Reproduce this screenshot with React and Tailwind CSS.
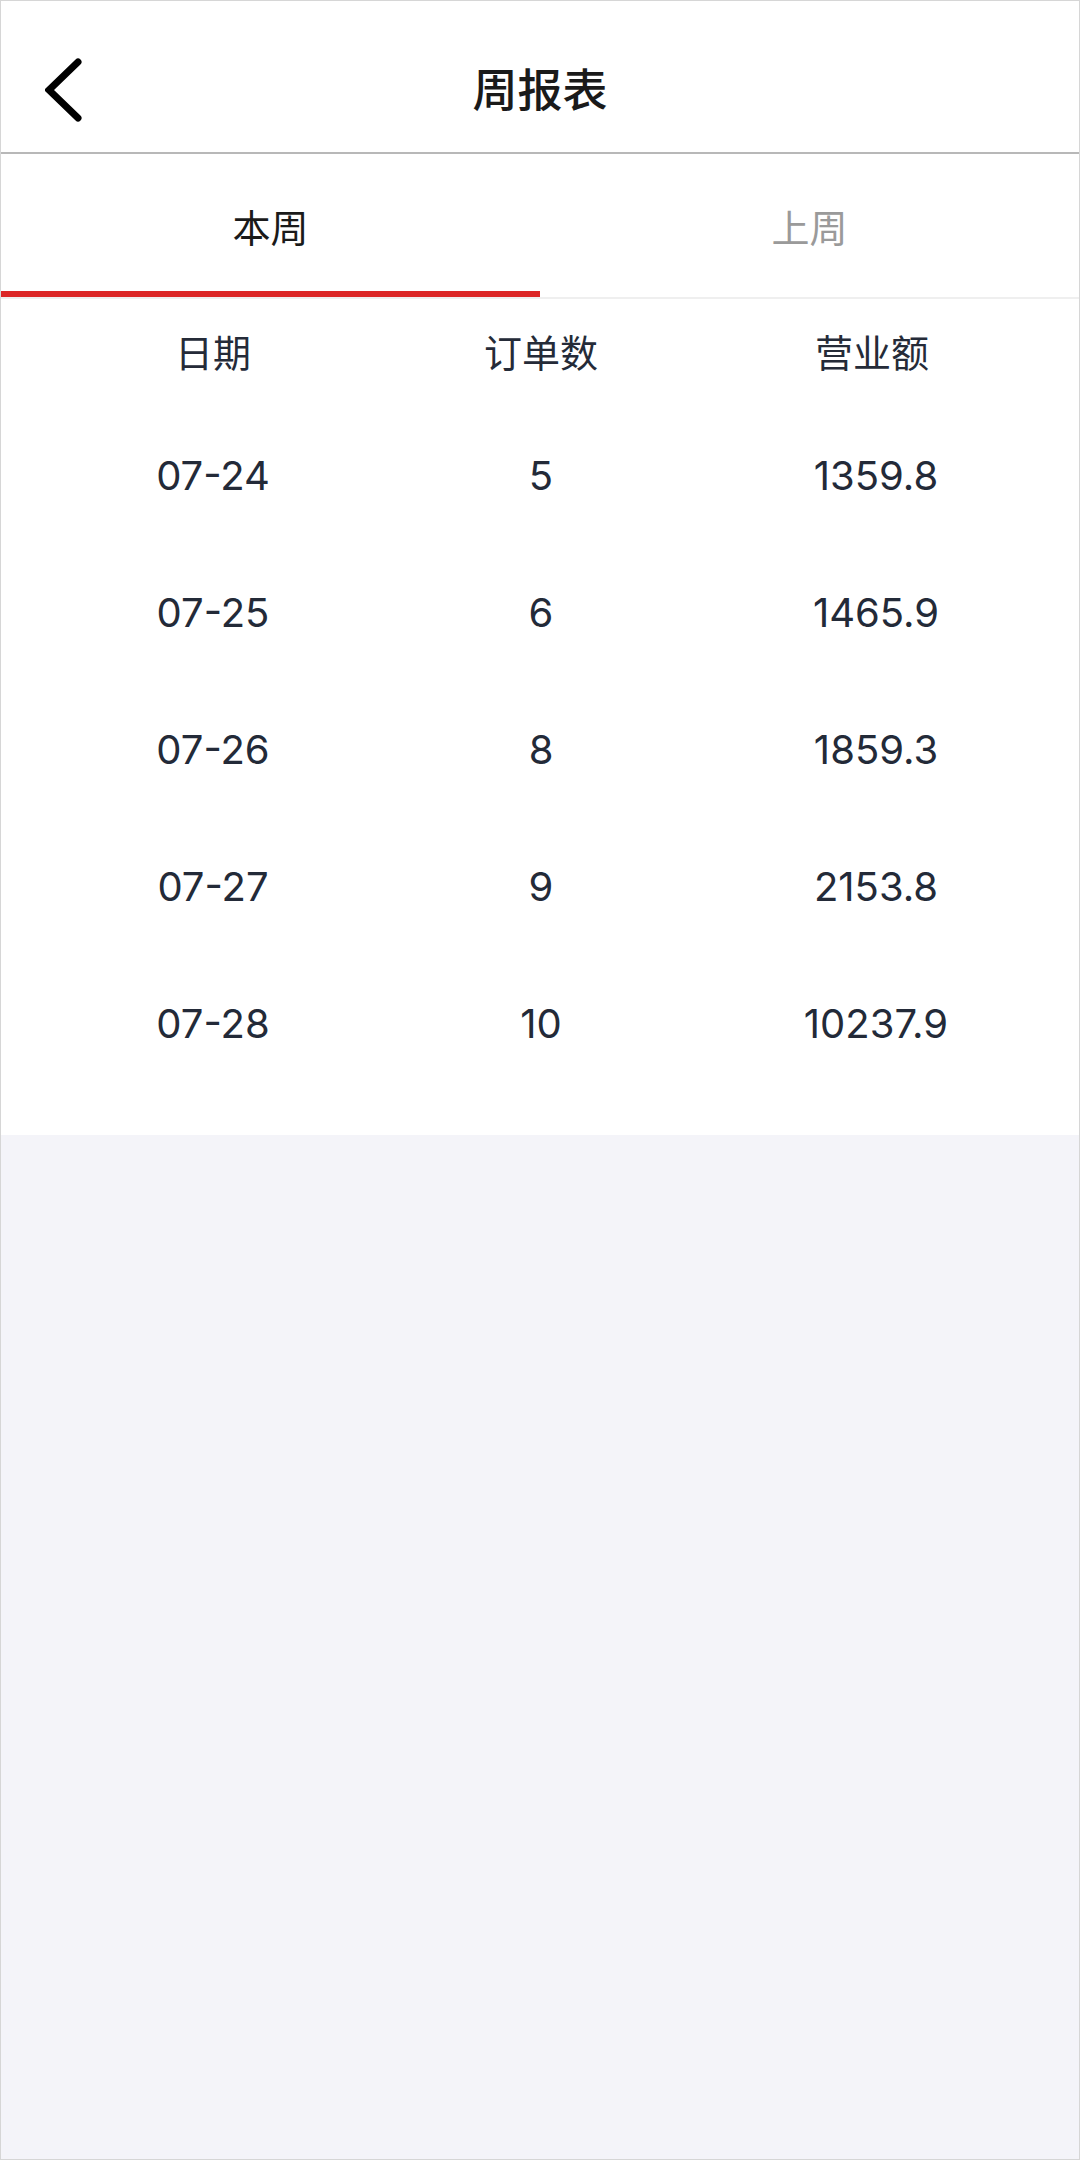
import { useState } from "react";

const rows = [
  { date: "07-24", orders: 5, amount: "1359.8" },
  { date: "07-25", orders: 6, amount: "1465.9" },
  { date: "07-26", orders: 8, amount: "1859.3" },
  { date: "07-27", orders: 9, amount: "2153.8" },
  { date: "07-28", orders: 10, amount: "10237.9" },
];

const font = { fontFamily: 'Inter, "Noto Sans CJK SC", sans-serif' };

export default function App() {
  const [tab, setTab] = useState(0);

  return (
    <div
      className="w-[1080px] h-[2160px] flex flex-col bg-[#f4f4f9] border border-[#d6d6d6]"
      style={font}
    >
      {/* header */}
      <div className="h-[153px] shrink-0 pt-[28px] grid grid-cols-[1fr_auto_1fr] items-center bg-white border-b-[2px] border-[#b8b8b8]">
        <div className="pl-[44px] -mt-[2px]">
          <svg width="40" height="64" viewBox="0 0 40 64" fill="none">
            <polyline
              points="33,4 4,32 33,60"
              stroke="#000"
              strokeWidth="7"
              strokeLinecap="round"
              strokeLinejoin="miter"
            />
          </svg>
        </div>
        <h1 className="text-[45px] font-medium text-[#1a1a1a] leading-none">周报表</h1>
        <div />
      </div>

      {/* tabs */}
      <div className="flex shrink-0 bg-white border-b-[2px] border-[#efefef]">
        {["本周", "上周"].map((t, i) => (
          <button
            key={t}
            onClick={() => setTab(i)}
            className={
              "flex-1 h-[143px] pt-[10px] text-[38px] leading-none border-b-[6px] " +
              (tab === i
                ? "text-[#1a1a1a] border-[#dc2626]"
                : "text-[#9a9a9a] border-transparent")
            }
          >
            {t}
          </button>
        ))}
      </div>

      {/* table */}
      <div className="bg-white pb-[43px]">
        <div className="grid grid-cols-[424px_232px_1fr] h-[108px] items-center text-center text-[38px] text-[#252b38]">
          <div>日期</div>
          <div>订单数</div>
          <div className="pl-[8px]">营业额</div>
        </div>
        {rows.map((r) => (
          <div
            key={r.date}
            className="grid grid-cols-[424px_232px_1fr] h-[137px] items-center text-center text-[40px] text-[#232a38]"
          >
            <div>{r.date}</div>
            <div>{r.orders}</div>
            <div className="pl-[16px]">{r.amount}</div>
          </div>
        ))}
      </div>
    </div>
  );
}
